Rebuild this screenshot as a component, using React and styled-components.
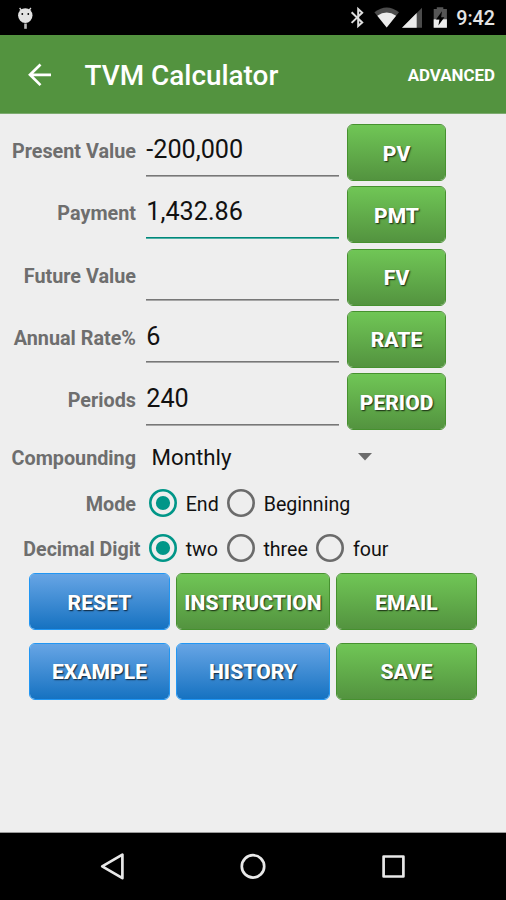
import React, { useState } from 'react';
import styled, { createGlobalStyle, css, ThemeProvider } from 'styled-components';

const theme = {
    primary: '#53933f',
    accent: '#009688',
    background: '#eeeeee',
    label: '#6e6e6e',
    control: '#6b6b6b',
    green: { from: '#70c656', to: '#53933f', border: '#46912f' },
    blue: { from: '#67a5e5', to: '#1672c1', border: '#2196f3' },
    bold: 700,
    medium: 500,
};

const GlobalStyle = createGlobalStyle`
    *, *::before, *::after {
        box-sizing: border-box;
    }
    body {
        margin: 0;
        font-family: Roboto, 'Liberation Sans', sans-serif;
    }
    button, input {
        font-family: inherit;
    }
`;

const Screen = styled.div`
    display: flex;
    flex-direction: column;
    width: 506px;
    height: 900px;
    overflow: hidden;
    background-color: ${({ theme }) => theme.background};
`;

const StatusBar = styled.div`
    display: flex;
    justify-content: space-between;
    flex: none;
    height: 35px;
    padding: 0 11px 0 17px;
    background-color: #000;
`;

const StatusGroup = styled.div`
    display: flex;
    align-items: center;
`;

const StatusIcons = styled.svg`
    display: block;
`;

const Clock = styled.span`
    margin: 2px 0 0 8px;
    font-size: 19.7px;
    font-weight: ${({ theme }) => theme.medium};
    line-height: 35px;
    color: #e4e4e4;
`;

const Toolbar = styled.header`
    display: flex;
    align-items: center;
    flex: none;
    height: 79px;
    padding: 2px 11px 0 28px;
    border-bottom: 1px solid #7dab6f;
    background-color: ${({ theme }) => theme.primary};
    color: white;
`;

const BackButton = styled.button`
    width: 24px;
    height: 24px;
    padding: 0;
    border: 0;
    background: none;
    color: inherit;
    svg {
        display: block;
    }
`;

const Title = styled.h1`
    flex: 1;
    margin: 2px 0 0 32.5px;
    font-size: 27.9px;
    font-weight: ${({ theme }) => theme.medium};
    line-height: 36px;
`;

const ToolbarAction = styled.button`
    padding: 0;
    border: 0;
    background: none;
    font-size: 16.9px;
    font-weight: ${({ theme }) => theme.bold};
    color: inherit;
`;

const Content = styled.main`
    flex: 1;
    padding-top: 10px;
`;

const Label = styled.span`
    font-size: ${({ $size }) => $size || 19.8}px;
    font-weight: ${({ theme }) => theme.bold};
    text-align: right;
    white-space: nowrap;
    color: ${({ theme }) => theme.label};
`;

const Fields = styled.div`
    display: grid;
    row-gap: 5.9px;
`;

const FieldRow = styled.div`
    display: grid;
    grid-template-columns: 146px 201.3px 98.5px;
    height: 56.4px;
    ${Label} {
        padding-right: 10px;
        line-height: 55px;
    }
`;

const FieldInput = styled.input`
    width: 193px;
    height: 51.5px;
    padding: 0 0 0 0.3px;
    border: 0;
    border-bottom: 1px solid #777;
    border-radius: 0;
    outline: 0;
    background: none;
    box-shadow: 0 1px #a6a6a6;
    font-size: 25.2px;
    color: #111;
    ${({ $focused }) =>
        $focused &&
        css`
            border-bottom-color: #00877a;
            box-shadow: 0 1px #4fb0a6;
        `}
`;

const Button = styled.button`
    height: 57px;
    padding: 1px 0 0;
    border: 1px solid ${({ $tone, theme }) => theme[$tone].border};
    border-radius: 6px;
    font-size: 21.1px;
    font-weight: 800;
    color: white;
    text-shadow: 1px 1px 1.5px rgba(0, 0, 0, 0.75);
    ${({ $tone, theme }) => css`
        background: linear-gradient(${theme[$tone].from}, ${theme[$tone].to}) padding-box;
    `}
`;

const OptionRow = styled.div`
    display: grid;
    grid-template-columns: ${({ $labelWidth }) => $labelWidth || 136}px auto;
    height: 45px;
    line-height: 48px;
`;

const CompoundingRow = styled(OptionRow)`
    height: 51px;
    line-height: 57px;
`;

const Select = styled.div`
    display: flex;
    align-items: center;
    justify-content: space-between;
    width: 220.5px;
    height: 54px;
    margin-left: 15.5px;
    font-size: 22.3px;
    line-height: 54px;
    color: #111;
`;

const Caret = styled.svg`
    display: block;
    margin-top: 1px;
`;

const RadioGroup = styled.div`
    display: flex;
    align-items: center;
    height: 45px;
    padding-left: ${({ $offset }) => $offset}px;
`;

const RadioOption = styled.div`
    display: flex;
    align-items: center;
    width: ${({ $width }) => $width}px;
    height: 45px;
    font-size: 19.6px;
    color: #111;
    cursor: pointer;
`;

const RadioText = styled.span`
    padding-top: 2px;
    line-height: 45px;
`;

const RadioCircle = styled.span`
    display: flex;
    align-items: center;
    justify-content: center;
    flex: none;
    width: 28px;
    height: 28px;
    margin-right: 8.7px;
    svg {
        display: block;
    }
`;

const Actions = styled.div`
    display: grid;
    grid-template-columns: 141px 154px 141px;
    gap: 12.5px 6px;
    margin: 2.5px 0 0 29px;
`;

const NavBar = styled.nav`
    flex: none;
    height: 68px;
    border-top: 1px solid #9a9a9a;
    background-color: #000;
    svg {
        display: block;
    }
`;

const fields = [
    { label: 'Present Value', value: '-200,000', button: 'PV' },
    { label: 'Payment', value: '1,432.86', button: 'PMT', focused: true },
    { label: 'Future Value', value: '', button: 'FV' },
    { label: 'Annual Rate%', value: '6', button: 'RATE' },
    { label: 'Periods', value: '240', button: 'PERIOD' },
];

const modes = [
    { label: 'End', width: 78 },
    { label: 'Beginning', width: 130 },
];

const digits = [
    { label: 'two', width: 77.7 },
    { label: 'three', width: 89.6 },
    { label: 'four', width: 80 },
];

const actions = [
    { label: 'RESET', tone: 'blue' },
    { label: 'INSTRUCTION', tone: 'green' },
    { label: 'EMAIL', tone: 'green' },
    { label: 'EXAMPLE', tone: 'blue' },
    { label: 'HISTORY', tone: 'blue' },
    { label: 'SAVE', tone: 'green' },
];

const Radio = ({ label, width, checked, onSelect }) => (
    <RadioOption $width={width} role="radio" aria-checked={checked} onClick={onSelect}>
        <RadioCircle>
            <svg width="28" height="28" viewBox="0 0 28 28">
                <circle
                    cx="14"
                    cy="14"
                    r="12.7"
                    fill="none"
                    stroke={checked ? theme.accent : theme.control}
                    strokeWidth="2.6"
                />
                {checked && <circle cx="14" cy="14" r="7.1" fill={theme.accent} />}
            </svg>
        </RadioCircle>
        <RadioText>{label}</RadioText>
    </RadioOption>
);

const AndroidHead = () => (
    <StatusIcons width="18" height="35" viewBox="17 0 18 35">
        <path d="M19.6 8l2.4 3M30.9 8l-2.4 3" stroke="#ddd" strokeWidth="1.3" />
        <ellipse cx="25.3" cy="15.6" rx="7.2" ry="7.4" fill="#e2e2e2" />
        <circle cx="22.3" cy="14" r="0.9" fill="#000" />
        <circle cx="28.3" cy="14" r="0.9" fill="#000" />
        <path d="M25.5 23.5v5.3" stroke="#bbb" strokeWidth="2.6" />
    </StatusIcons>
);

const SystemIcons = () => (
    <StatusIcons width="99" height="35" viewBox="348 0 99 35">
        <path
            d="M350.6 12.3l10.6 10.2-4 3.5V9l4 3.7-10.6 10.2"
            fill="none"
            stroke="#dedede"
            strokeWidth="2"
        />
        <path d="M373.4 12.2q12.3-9.6 24.6 0L385.7 27.5z" fill="#4b4b4b" />
        <path d="M376.3 15.7q9.4-6.2 18.8 0L385.7 27.5z" fill="#ececec" />
        <path d="M421 7.7V27.7H401z" fill="#4b4b4b" />
        <path d="M415.7 13V27.7H401z" fill="#ececec" />
        <path d="M432.7 9h3.1V7.3h6.5V9h3.6v18.7h-13.2z" fill="#555" />
        <path d="M432.7 19.3h13.2v8.4h-13.2z" fill="#ececec" />
        <path d="M441 11.3l-6 8.1h3.4l-1 6.1 6-8.2h-3.3z" fill="#000" />
    </StatusIcons>
);

const App = () => {
    const [mode, setMode] = useState('End');
    const [digit, setDigit] = useState('two');

    return (
        <ThemeProvider theme={theme}>
            <GlobalStyle />
            <Screen>
                <StatusBar>
                    <StatusGroup>
                        <AndroidHead />
                    </StatusGroup>
                    <StatusGroup>
                        <SystemIcons />
                        <Clock>9:42</Clock>
                    </StatusGroup>
                </StatusBar>
                <Toolbar>
                    <BackButton aria-label="Back">
                        <svg width="24" height="24" viewBox="0 0 24 24">
                            <path
                                d="M23 11.8H2M12.5 1.5L2 11.8l10.5 10.3"
                                fill="none"
                                stroke="currentColor"
                                strokeWidth="2.7"
                            />
                        </svg>
                    </BackButton>
                    <Title>TVM Calculator</Title>
                    <ToolbarAction>ADVANCED</ToolbarAction>
                </Toolbar>
                <Content>
                    <Fields>
                        {fields.map(({ label, value, button, focused }) => (
                            <FieldRow key={label}>
                                <Label>{label}</Label>
                                <FieldInput
                                    aria-label={label}
                                    defaultValue={value}
                                    $focused={focused}
                                />
                                <Button $tone="green">{button}</Button>
                            </FieldRow>
                        ))}
                    </Fields>
                    <CompoundingRow>
                        <Label>Compounding</Label>
                        <Select>
                            Monthly
                            <Caret width="14" height="8" viewBox="0 0 14 8">
                                <path d="M0 0h14L7 7.6z" fill={theme.control} />
                            </Caret>
                        </Select>
                    </CompoundingRow>
                    <OptionRow>
                        <Label>Mode</Label>
                        <RadioGroup $offset={13} role="radiogroup">
                            {modes.map(({ label, width }) => (
                                <Radio
                                    key={label}
                                    label={label}
                                    width={width}
                                    checked={mode === label}
                                    onSelect={() => setMode(label)}
                                />
                            ))}
                        </RadioGroup>
                    </OptionRow>
                    <OptionRow $labelWidth={140.5}>
                        <Label $size={19.6}>Decimal Digit</Label>
                        <RadioGroup $offset={8.5} role="radiogroup">
                            {digits.map(({ label, width }) => (
                                <Radio
                                    key={label}
                                    label={label}
                                    width={width}
                                    checked={digit === label}
                                    onSelect={() => setDigit(label)}
                                />
                            ))}
                        </RadioGroup>
                    </OptionRow>
                    <Actions>
                        {actions.map(({ label, tone }) => (
                            <Button key={label} $tone={tone}>
                                {label}
                            </Button>
                        ))}
                    </Actions>
                </Content>
                <NavBar>
                    <svg width="506" height="67" viewBox="0 833 506 67">
                        <g fill="none" stroke="#e8e8e8" strokeWidth="2.7" strokeLinejoin="round">
                            <path d="M122.4 854.6v23.6L102.2 866.4z" />
                            <circle cx="253" cy="866.4" r="11.2" />
                            <path d="M383.6 856.5h19.8v20h-19.8z" />
                        </g>
                    </svg>
                </NavBar>
            </Screen>
        </ThemeProvider>
    );
};

export default App;
